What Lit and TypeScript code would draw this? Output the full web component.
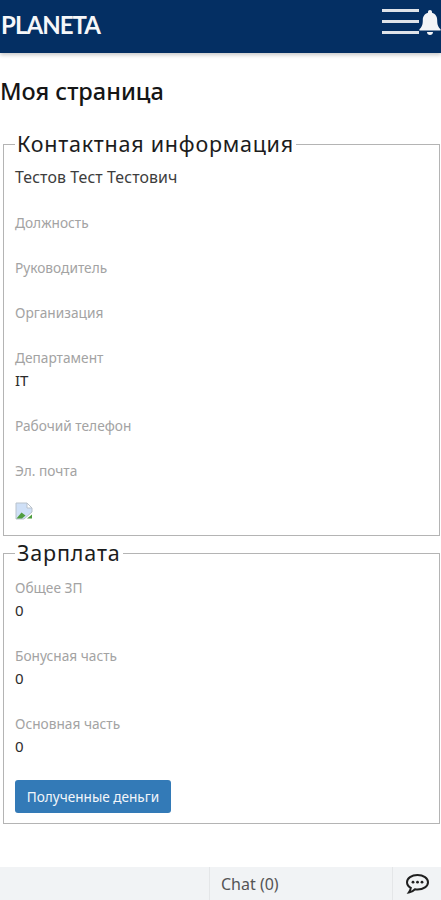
import { LitElement, html, css } from "lit";
import { customElement } from "lit/decorators.js";

@customElement("app-root")
export class AppRoot extends LitElement {
  static styles = css`
    :host { display: block; width: 441px; height: 900px; position: relative; overflow: hidden; background: #fff; font-family: "Noto Sans", "Open Sans", sans-serif; color: #222; }
    .top { height: 53px; background: #042f63; box-shadow: 0 2px 4px rgba(0,0,0,.22); display: flex; align-items: center; justify-content: space-between; padding-left: 1px; }
    .brand { font-family: "Lato", sans-serif; font-size: 24px; font-weight: 700; letter-spacing: -0.95px; color: #f6f7f9; position: relative; top: -2px; }
    .icons { display: flex; align-items: center; height: 53px; }
    .burger { display: flex; flex-direction: column; gap: 8px; width: 37px; margin-top: -11px; }
    .burger i { display: block; height: 3px; background: #dfe3e9; }
    .bell { display: block; margin-top: -8px; }
    h1 { font-size: 23.5px; font-weight: 500; line-height: 30px; margin: 23px 0 0 0; color: #151515; }
    fieldset { margin: 0 1px 0 3px; border: 1.5px solid #b4b4b4; padding: 0 11px; }
    fieldset.contact { margin-top: 23px; height: 407px; box-sizing: border-box; }
    fieldset.salary { margin-top: 2px; height: 286px; box-sizing: border-box; }
    legend { font-size: 21.5px; line-height: 30px; padding: 0 2px; margin-left: 0; color: #1c1c1c; letter-spacing: 0.75px; }
    .salary legend { letter-spacing: 0.85px; }
    .name { font-size: 15.9px; line-height: 22px; margin: 7px 0 24px; color: #3d3d3d; letter-spacing: 0.1px; }
    .field { margin-bottom: 23px; }
    .lbl { font-size: 13.7px; line-height: 22px; color: #a3a3a3; }
    .val { font-size: 15px; line-height: 23px; color: #2b2b2b; }
    .salary .first { margin-top: 9px; }
    .broken { display: block; margin-top: -3px; }
    button { display: block; margin-top: -1px; width: 156px; height: 33px; border: 0; border-radius: 3px; background: #337ab7; color: #f2f6fa; font: 13.6px "Noto Sans", sans-serif; padding: 0; }
    .chat { position: absolute; left: 0; right: 0; bottom: 0; height: 33px; background: #f1f3f5; display: flex; align-items: center; font-size: 16px; color: #555; }
    .cell { height: 33px; display: flex; align-items: center; box-sizing: border-box; }
    .c1 { width: 210px; border-right: 1px solid #e4e6e8; }
    .c2 { width: 183px; padding-left: 11px; border-right: 1px solid #e4e6e8; }
    .c3 { flex: 1; justify-content: center; }
  `;

  private field(label: string, value = "", cls = "") {
    return html`<div class="field ${cls}"><div class="lbl">${label}</div>${value ? html`<div class="val">${value}</div>` : ""}</div>`;
  }

  render() {
    return html`
      <div class="top">
        <div class="brand">PLANETA</div>
        <div class="icons">
          <div class="burger"><i></i><i></i><i></i></div>
          <svg class="bell" width="22" height="26" viewBox="0 0 22 26" fill="#f4f5f7"><path d="M11 0c1.200 0 2 .8 2 2v.8c3.400.8 5.200 3.800 5.200 7.400 0 4.800 1.200 6.900 3.400 9v1.300H.4v-1.300c2.200-2.100 3.400-4.200 3.400-9 0-3.600 1.800-6.600 5.200-7.400V2c0-1.200.8-2 2-2z"/><path d="M8 22h6c0 1.800-1.300 3-3 3s-3-1.200-3-3z"/></svg>
        </div>
      </div>
      <h1>Моя страница</h1>
      <fieldset class="contact">
        <legend>Контактная информация</legend>
        <div class="name">Тестов Тест Тестович</div>
        ${this.field("Должность")}
        ${this.field("Руководитель")}
        ${this.field("Организация")}
        ${this.field("Департамент", "IT")}
        ${this.field("Рабочий телефон")}
        ${this.field("Эл. почта")}
        <svg class="broken" width="18" height="18" viewBox="0 0 18 18">
          <path d="M1 1h11l5 5v4l-8 7H1z" fill="#cfe0f7" stroke="#b9c2cc" stroke-width="1"/>
          <path d="M12 1v5h5z" fill="#fff" stroke="#b9c2cc" stroke-width="1"/>
          <path d="M1.500 16.500l5-6 4 3-3.500 3z" fill="#4f9d3f"/>
          <path d="M12 16.500l5-4v4z" fill="#4f9d3f"/>
        </svg>
      </fieldset>
      <fieldset class="salary">
        <legend>Зарплата</legend>
        ${this.field("Общее ЗП", "0", "first")}
        ${this.field("Бонусная часть", "0")}
        ${this.field("Основная часть", "0")}
        <button>Полученные деньги</button>
      </fieldset>
      <div class="chat">
        <div class="cell c1"></div>
        <div class="cell c2">Chat (0)</div>
        <div class="cell c3">
          <svg width="25" height="22" viewBox="0 0 25 22" fill="none" stroke="#1f1f1f" stroke-width="2"><path d="M12.500 2C6.500 2 2 5.200 2 9.200c0 2.300 1.500 4.300 3.800 5.600-.2 1.800-1 3.300-2 4.700 2.500-.4 4.600-1.500 6.200-3.200.8.100 1.600.2 2.500.2 6 0 10.500-3.200 10.500-7.300S18.500 2 12.500 2z"/><g fill="#1f1f1f" stroke="none"><circle cx="8" cy="9.200" r="1.400"/><circle cx="12.500" cy="9.200" r="1.400"/><circle cx="17" cy="9.200" r="1.400"/></g></svg>
        </div>
      </div>
    `;
  }
}
